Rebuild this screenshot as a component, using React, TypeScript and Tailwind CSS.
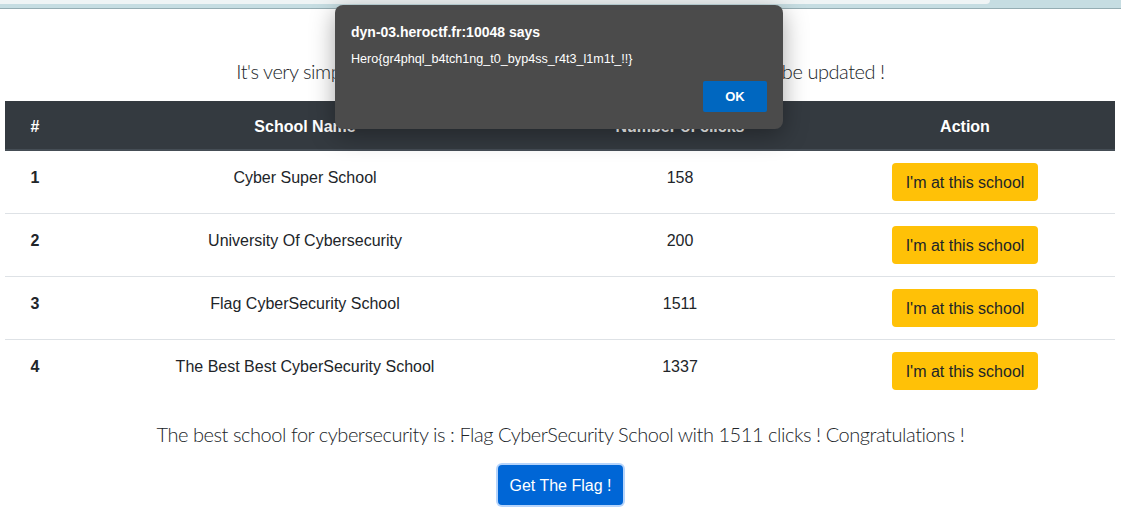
import React from "react";

const rows = [
  { n: "1", name: "Cyber Super School", clicks: "158" },
  { n: "2", name: "University Of Cybersecurity", clicks: "200" },
  { n: "3", name: "Flag CyberSecurity School", clicks: "1511" },
  { n: "4", name: "The Best Best CyberSecurity School", clicks: "1337" },
];

export default function App() {
  return (
    <div
      className="relative w-[1121px] h-[520px] overflow-hidden bg-white text-[#212529]"
      style={{ fontFamily: '"Liberation Sans", Arial, sans-serif' }}
    >
      {/* browser chrome remnant */}
      <div className="h-[9px] bg-[#c6dde2] border-b border-[#95adb3]">
        <div className="w-[990px] h-[4px] bg-[#eff4f5] rounded-br-[8px]" />
      </div>

      <div className="px-[5px]">
        <p
          className="mt-[47px] h-[30px] text-center text-[20px] leading-[30px] font-light tracking-[-0.45px] text-[#212529]"
          style={{ fontFamily: '"Lato", "Liberation Sans", sans-serif' }}
        >
          It's very simple, click on the button of your school and its score will be updated !
        </p>

        <table className="mt-[15px] w-[1110px] border-collapse text-[16px]">
          <thead>
            <tr className="bg-[#343a40] text-white border-b-2 border-[#454d55]">
              <th className="w-[60px] h-[49px] pt-[14px] pb-[10px] leading-[24px] text-center font-bold">#</th>
              <th className="w-[480px] pt-[14px] pb-[10px] leading-[24px] text-center font-bold">School Name</th>
              <th className="w-[270px] pt-[14px] pb-[10px] leading-[24px] text-center font-bold">Number of clicks</th>
              <th className="w-[300px] pt-[14px] pb-[10px] leading-[24px] text-center font-bold">Action</th>
            </tr>
          </thead>
          <tbody>
            {rows.map((r, i) => (
              <tr key={r.n} className={i < rows.length - 1 ? "border-b border-[#dee2e6]" : ""}>
                <td className="pt-[15px] align-top text-center font-bold leading-[24px]">{r.n}</td>
                <td className="pt-[15px] align-top text-center leading-[24px]">{r.name}</td>
                <td className="pt-[15px] align-top text-center leading-[24px]">{r.clicks}</td>
                <td className="pt-[12px] pb-[12px] align-top text-center">
                  <button className="h-[38px] w-[146px] rounded-[4px] bg-[#ffc107] text-[16px] text-[#212529] leading-[24px] pt-[2px]">
                    I'm at this school
                  </button>
                </td>
              </tr>
            ))}
          </tbody>
        </table>

        <p
          className="mt-[17px] h-[30px] text-center text-[20px] leading-[30px] font-light tracking-[-0.45px] text-[#212529]"
          style={{ fontFamily: '"Lato", "Liberation Sans", sans-serif' }}
        >
          The best school for cybersecurity is : Flag CyberSecurity School with 1511 clicks ! Congratulations !
        </p>

        <div className="mt-[16px] flex justify-center">
          <button className="h-[40px] w-[125px] rounded-[4px] bg-[#0066d6] text-white text-[16px] pt-[2px] ring-[2px] ring-[#b6d4fb]">
            Get The Flag !
          </button>
        </div>
      </div>

      {/* alert dialog */}
      <div
        className="absolute left-[335px] top-[5px] w-[448px] h-[124px] rounded-[8px] bg-[#4b4b4b] shadow-[0_6px_24px_rgba(0,0,0,0.35)] px-[16px] pt-[18px]"
        style={{ fontFamily: '"Liberation Sans", Arial, sans-serif' }}
      >
        <div className="text-[14px] font-bold text-white leading-[18px]">dyn-03.heroctf.fr:10048 says</div>
        <div className="mt-[9px] text-[12.6px] text-white leading-[18px]">Hero{"{"}gr4phql_b4tch1ng_t0_byp4ss_r4t3_l1m1t_!!{"}"}</div>
        <div className="mt-[13px] flex justify-end">
          <button className="w-[64px] h-[31px] rounded-[2px] bg-[#0067c0] text-white text-[13px] font-bold">OK</button>
        </div>
      </div>
    </div>
  );
}
